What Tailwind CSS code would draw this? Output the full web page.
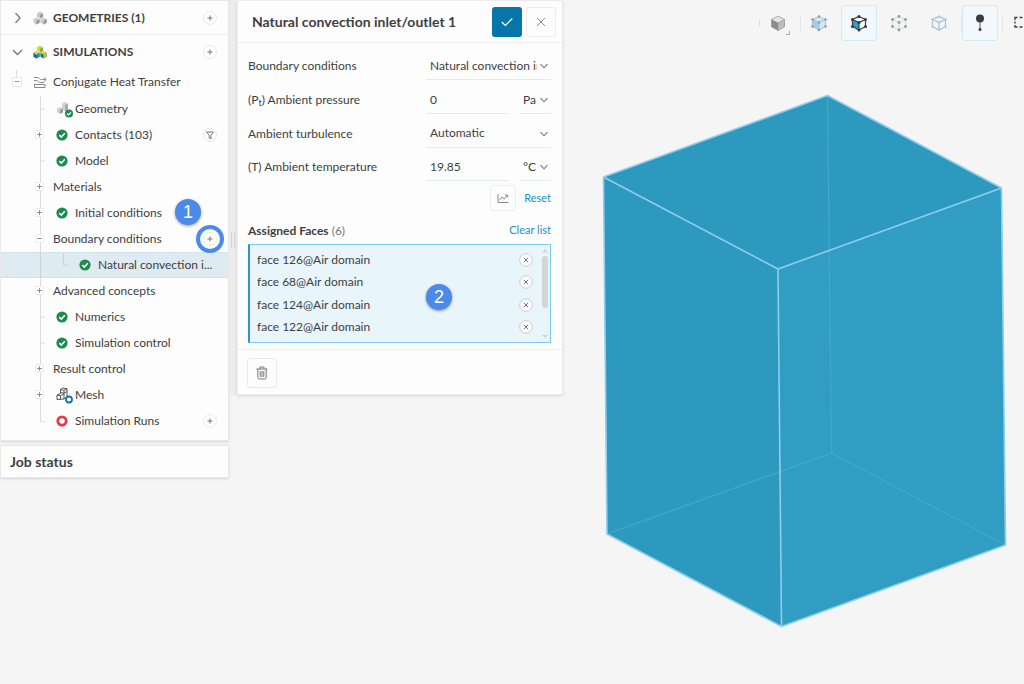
<!DOCTYPE html>
<html lang="en">
<head>
<meta charset="utf-8">
<meta name="viewport" content="width=device-width, initial-scale=1">
<title>Simulation setup</title>
<script src="https://cdn.jsdelivr.net/npm/@tailwindcss/browser@4"></script>
</head>
<body class="bg-[#f5f5f5] font-['Lato',sans-serif] text-[12px] text-[#404040]">

<!-- Shared icons -->
<svg class="hidden" aria-hidden="true">
  <symbol id="plus" viewBox="0 0 14 14"><circle cx="7" cy="7" r="6.4" fill="#fff" stroke="#e6e9ec"/><path d="M4.4 7h5.2M7 4.4v5.2" stroke="#777" fill="none"/></symbol>
  <symbol id="ok" viewBox="0 0 12 12"><circle cx="6" cy="6" r="5.6" fill="#1d8a4e"/><path d="M3.3 6.1l2 1.9 3.5-3.7" fill="none" stroke="#fff" stroke-width="1.6"/></symbol>
  <symbol id="chev" viewBox="0 0 10 10"><path d="M1.5 3.2L5 6.8l3.5-3.6" fill="none" stroke="#777" stroke-width="1.1"/></symbol>
  <symbol id="line-mid" viewBox="0 0 24 26"><path d="M12.5 0v26M12.5 13H17" fill="none" stroke="#dcdcdc"/></symbol>
  <symbol id="line-plus" viewBox="0 0 24 26"><path d="M12.5 0v26" stroke="#dcdcdc"/><path d="M7.500 8.500h8v8h-8z" fill="#fff" stroke="#ececec"/><path d="M9.200 12.500h4.600M11.500 10.200v4.600" stroke="#888" fill="none"/></symbol>
  <symbol id="line-minus" viewBox="0 0 24 26"><path d="M12.500 0v26" stroke="#dcdcdc"/><path d="M7.500 8.500h8v8h-8z" fill="#fff" stroke="#ececec"/><path d="M9.200 12.500h4.600" stroke="#888" fill="none"/></symbol>
  <symbol id="remove" viewBox="0 0 14 14"><circle cx="7" cy="7" r="6.300" fill="#fdfdfd" stroke="#ccc"/><path d="M4.800 4.800l4.400 4.400M9.200 4.800l-4.400 4.400" stroke="#777" fill="none"/></symbol>
  <symbol id="cubes" viewBox="0 0 14 14">
    <path d="M4 2.200L7 .5l3 1.700v3.600L7 7.500 4 5.800z" fill="#c9c9c9"/><path d="M7 4v3.500l3-1.700V2.200z" fill="#999"/>
    <path d="M.3 8L3.400 6.400 6.600 8v3.800L3.400 13.500.3 11.800z" fill="#cfcfcf"/><path d="M3.400 9.800v3.700l3.200-1.700V8z" fill="#999"/>
    <path d="M7.400 8l3.200-1.600L13.700 8v3.800l-3.100 1.700-3.200-1.700z" fill="#cfcfcf"/><path d="M10.600 9.800v3.700l3.100-1.700V8z" fill="#999"/>
  </symbol>
</svg>

<div class="flex min-h-screen items-start overflow-hidden">

  <!-- Project tree -->
  <aside class="w-[229px] shrink-0">
    <nav aria-label="Project" class="border border-[#e8e8e8] bg-[#fdfdfd] pb-[6px] shadow-sm">
      <div class="flex h-[34px] items-center border-b border-[#ececec] pr-[11px] pl-3">
        <button aria-label="Expand geometries" class="mr-[10px] h-[10px] w-[10px]"><svg class="h-full w-full" viewBox="0 0 10 10"><path d="M2.500 0l4.500 5-4.500 5" fill="none" stroke="#777" stroke-width="1.300"/></svg></button>
        <svg class="mr-[6px] h-[14px] w-[14px]"><use href="#cubes"/></svg>
        <h2 class="flex-1 font-bold">GEOMETRIES (1)</h2>
        <button aria-label="Add geometry" class="h-[14px] w-[14px]"><svg class="h-full w-full"><use href="#plus"/></svg></button>
      </div>
      <div class="flex h-[33px] items-center pr-[11px] pl-3">
        <button aria-label="Collapse simulations" class="mr-[10px] h-[10px] w-[10px]"><svg class="h-full w-full" viewBox="0 0 10 10"><path d="M0 3l4.500 4.500L9 3" fill="none" stroke="#777" stroke-width="1.300"/></svg></button>
        <svg class="mr-[6px] h-[14px] w-[14px]" viewBox="0 0 14 14">
          <path d="M4 2.200L7 .5l3 1.700v3.600L7 7.500 4 5.800z" fill="#d6d82c"/><path d="M7 4v3.500l3-1.700V2.200z" fill="#8fa839"/>
          <path d="M.3 8L3.400 6.400 6.600 8v3.800L3.400 13.500.3 11.800z" fill="#0b72ae"/><path d="M.3 8l3.100-1.600L6.600 8 3.400 9.800z" fill="#d6d82c"/><path d="M4.500 9.500v3.400l2.100-1.100V8z" fill="#4a93a0"/>
          <path d="M7.400 8l3.200-1.600L13.700 8v3.800l-3.100 1.700-3.200-1.700z" fill="#0b72ae"/><path d="M7.400 8l3.200-1.600L13.700 8l-3.100 1.800z" fill="#d6d82c"/><path d="M10.600 9.800v3.700l3.100-1.700V8z" fill="#c2c632"/>
        </svg>
        <h2 class="flex-1 font-bold">SIMULATIONS</h2>
        <button aria-label="Add simulation" class="h-[14px] w-[14px]"><svg class="h-full w-full"><use href="#plus"/></svg></button>
      </div>
      <div class="flex h-7 items-center">
        <button aria-label="Collapse Conjugate Heat Transfer" class="ml-[3px] h-[26px] w-6"><svg class="h-full w-full" viewBox="0 0 24 26"><path d="M12.500 1v8" stroke="#dcdcdc"/><path d="M8.500 8.500h9v9h-9z" fill="#fff" stroke="#e6e6e6"/><path d="M10.500 12.500h5" stroke="#999"/></svg></button>
        <svg class="mr-[6px] ml-[5px] h-[14px] w-[14px]" viewBox="0 0 14 14" fill="none" stroke="#888"><path d="M1 2.500h3.500c2 0 2 2 4 2H13M11 2.500l2.200 2L11 6.500M1 5.500h2.500c2 0 2 2 4 2H11M1.500 9.500H12v3H1.500z"/></svg>
        <span>Conjugate Heat Transfer</span>
      </div>
      <ul>
        <li class="flex h-[26px] items-center"><svg class="ml-[27px] h-[26px] w-6"><use href="#line-mid"/></svg>
          <svg class="mr-[2px] ml-[4px] h-[18px] w-[17px]" viewBox="0 0 17 18"><path d="M6 3.500L9 2l3 1.500v6l-3 1.800L6 9.500z" fill="#d2d2d2"/><path d="M9 5v6.300l3-1.800v-6z" fill="#aaa"/><path d="M1 8.500L4 7l3 1.500v3.800L4 14l-3-1.700z" fill="#cfcfcf"/><path d="M4 10v4l3-1.700V8.500z" fill="#9a9a9a"/><circle cx="13" cy="13.500" r="4" fill="#1d8a4e"/><path d="M11 13.500l1.500 1.400 2.500-2.600" fill="none" stroke="#fff" stroke-width="1.200"/></svg>
          <span>Geometry</span></li>
        <li class="flex h-[26px] items-center pr-[11px]"><button aria-label="Expand contacts" class="ml-[27px] h-[26px] w-6"><svg class="h-full w-full"><use href="#line-plus"/></svg></button>
          <svg class="mr-[7px] ml-1 h-3 w-3"><use href="#ok"/></svg><span class="flex-1">Contacts (103)</span>
          <button aria-label="Filter contacts" class="h-[14px] w-[14px]"><svg class="h-full w-full" viewBox="0 0 14 14"><circle cx="7" cy="7" r="6.400" fill="#fff" stroke="#dde3e7"/><path d="M3.500 4h7L8 7.200V10.800L6.200 10V7.200z" fill="none" stroke="#777"/></svg></button></li>
        <li class="flex h-[26px] items-center"><svg class="ml-[27px] h-[26px] w-6"><use href="#line-mid"/></svg>
          <svg class="mr-[7px] ml-1 h-3 w-3"><use href="#ok"/></svg><span>Model</span></li>
        <li class="flex h-[26px] items-center"><button aria-label="Expand materials" class="ml-[27px] h-[26px] w-6"><svg class="h-full w-full"><use href="#line-plus"/></svg></button><span class="pl-px">Materials</span></li>
        <li class="relative flex h-[26px] items-center"><button aria-label="Expand initial conditions" class="ml-[27px] h-[26px] w-6"><svg class="h-full w-full"><use href="#line-plus"/></svg></button>
          <svg class="mr-[7px] ml-1 h-3 w-3"><use href="#ok"/></svg><span>Initial conditions</span>
          <span class="absolute top-[-1px] right-[27px] flex h-[26px] w-[26px] items-center justify-center rounded-full bg-[#4b8ae8] font-['Liberation_Sans',sans-serif] text-[18px] text-white shadow-[0_1px_3px_#00000066]">1</span></li>
        <li class="relative flex h-[26px] items-center pr-[11px]"><button aria-label="Collapse boundary conditions" class="ml-[27px] h-[26px] w-6"><svg class="h-full w-full"><use href="#line-minus"/></svg></button><span class="flex-1 pl-px">Boundary conditions</span>
          <button aria-label="Add boundary condition" class="h-[14px] w-[14px]"><svg class="h-full w-full"><use href="#plus"/></svg></button>
          <span class="pointer-events-none absolute top-[-1px] right-1 z-10 h-7 w-7 rounded-full border-4 border-[#4b8ae8]"></span></li>
        <li class="flex h-[26px] items-center border-y border-[#d0e4ee] bg-[#dfebf2]"><svg class="ml-[27px] h-[26px] w-12" viewBox="0 0 48 26"><path d="M12.500 0v26M35.500 1v12H40" fill="none" stroke="#ccd3d8"/></svg>
          <svg class="mr-[7px] ml-[3px] h-3 w-3"><use href="#ok"/></svg><span>Natural convection i...</span></li>
        <li class="flex h-[26px] items-center"><button aria-label="Expand advanced concepts" class="ml-[27px] h-[26px] w-6"><svg class="h-full w-full"><use href="#line-plus"/></svg></button><span class="pl-px">Advanced concepts</span></li>
        <li class="flex h-[26px] items-center"><svg class="ml-[27px] h-[26px] w-6"><use href="#line-mid"/></svg>
          <svg class="mr-[7px] ml-1 h-3 w-3"><use href="#ok"/></svg><span>Numerics</span></li>
        <li class="flex h-[26px] items-center"><svg class="ml-[27px] h-[26px] w-6"><use href="#line-mid"/></svg>
          <svg class="mr-[7px] ml-1 h-3 w-3"><use href="#ok"/></svg><span>Simulation control</span></li>
        <li class="flex h-[26px] items-center"><button aria-label="Expand result control" class="ml-[27px] h-[26px] w-6"><svg class="h-full w-full"><use href="#line-plus"/></svg></button><span class="pl-px">Result control</span></li>
        <li class="flex h-[26px] items-center"><button aria-label="Expand mesh" class="ml-[27px] h-[26px] w-6"><svg class="h-full w-full"><use href="#line-plus"/></svg></button>
          <svg class="mr-[2px] ml-[4px] h-[18px] w-[17px]" viewBox="0 0 17 18" fill="none"><path d="M4.500 3.500L7 2l4 .8v8.400L8 13l-7 .5V9l3.500-1.500zM4.500 3.500L8 4.500l3-1.700M8 4.500V13M1 9l3.500.7L8 8M4.500 9.700v3.500M4.500 6.500l3.500.7 3-1.700M4.500 3.500v4" stroke="#555"/><circle cx="13" cy="13.500" r="3" fill="#fff" stroke="#0f76ac" stroke-width="1.800"/></svg>
          <span>Mesh</span></li>
        <li class="flex h-[26px] items-center pr-[11px]"><svg class="ml-[27px] h-[26px] w-6" viewBox="0 0 24 26"><path d="M12.500 0v13.500H17" fill="none" stroke="#dcdcdc"/></svg>
          <svg class="mr-[7px] ml-1 h-3 w-3" viewBox="0 0 12 12"><circle cx="6" cy="6" r="4.200" fill="#fff" stroke="#e23b48" stroke-width="2.800"/></svg><span class="flex-1">Simulation Runs</span>
          <button aria-label="Add run" class="h-[14px] w-[14px]"><svg class="h-full w-full"><use href="#plus"/></svg></button></li>
      </ul>
    </nav>
    <section class="mt-1 flex h-[33px] items-center border border-[#e8e8e8] bg-[#fdfdfd] pl-[9px] shadow-sm">
      <h2 class="text-[14px] font-bold">Job status</h2>
    </section>
  </aside>

  <!-- Boundary condition settings -->
  <div class="flex w-[334px] shrink-0 items-stretch">
    <div class="flex w-2 shrink-0 justify-center gap-[2px] bg-[#ececec] pt-[232px]">
      <span class="h-4 w-px bg-[#d4d4d4]"></span><span class="h-4 w-px bg-[#d4d4d4]"></span>
    </div>
    <form class="min-w-0 flex-1 border border-[#ececec] bg-[#fdfdfd] shadow-sm">
      <div class="flex h-[42px] items-center gap-1 border-b border-[#ececec] pr-[6px] pl-[14px]">
        <h1 class="flex-1 text-[14px] font-bold">Natural convection inlet/outlet 1</h1>
        <button type="button" aria-label="Apply" class="flex h-[30px] w-[30px] items-center justify-center rounded-[3px] bg-[#0675aa]"><svg class="h-3 w-3" viewBox="0 0 12 12"><path d="M.8 6l3.500 3.500 7-7" fill="none" stroke="#fff" stroke-width="1.200"/></svg></button>
        <button type="button" aria-label="Close" class="flex h-[30px] w-[30px] items-center justify-center rounded-[3px] border border-[#ececec]"><svg class="h-[10px] w-[10px]" viewBox="0 0 10 10"><path d="M1 1l8 8M9 1L1 9" stroke="#888"/></svg></button>
      </div>
      <div class="pt-[6px] pr-[11px] pl-[10px]">
        <div class="flex h-[34px] items-center">
          <label for="bc" class="flex-1">Boundary conditions</label>
          <div class="relative w-[125px]">
            <select id="bc" class="h-[28px] w-full appearance-none border-b border-[#e4e9ec] pr-[14px] pl-1"><option>Natural convection inlet/outlet</option></select>
            <svg class="pointer-events-none absolute top-[9px] right-[2px] h-[10px] w-[10px]"><use href="#chev"/></svg>
          </div>
        </div>
        <div class="flex h-[34px] items-center">
          <label for="pt" class="flex-1">(P<sub class="text-[9px]">t</sub>) Ambient pressure</label>
          <div class="flex w-[125px] justify-between">
            <input id="pt" value="0" class="h-[28px] w-[82px] border-b border-[#e4e9ec] pl-1">
            <div class="relative w-8">
              <select aria-label="Pressure unit" class="h-[28px] w-full appearance-none border-b border-[#e4e9ec] pl-1"><option>Pa</option></select>
              <svg class="pointer-events-none absolute top-[9px] right-[2px] h-[10px] w-[10px]"><use href="#chev"/></svg>
            </div>
          </div>
        </div>
        <div class="flex h-[33px] items-center">
          <label for="turb" class="flex-1">Ambient turbulence</label>
          <div class="relative w-[125px]">
            <select id="turb" class="h-[28px] w-full appearance-none border-b border-[#e4e9ec] pr-[14px] pl-1"><option>Automatic</option></select>
            <svg class="pointer-events-none absolute top-[9px] right-[2px] h-[10px] w-[10px]"><use href="#chev"/></svg>
          </div>
        </div>
        <div class="flex h-[34px] items-center">
          <label for="temp" class="flex-1">(T) Ambient temperature</label>
          <div class="flex w-[125px] justify-between">
            <input id="temp" value="19.85" class="h-[28px] w-[82px] border-b border-[#e4e9ec] pl-1">
            <div class="relative w-8">
              <select aria-label="Temperature unit" class="h-[28px] w-full appearance-none border-b border-[#e4e9ec] pl-1"><option>°C</option></select>
              <svg class="pointer-events-none absolute top-[9px] right-[2px] h-[10px] w-[10px]"><use href="#chev"/></svg>
            </div>
          </div>
        </div>
        <div class="mt-px flex h-[26px] items-center justify-end gap-2">
          <button type="button" aria-label="Plot" class="flex h-[26px] w-[26px] items-center justify-center rounded-[3px] border border-[#ececec]"><svg class="h-3 w-3" viewBox="0 0 12 12"><path d="M1 2v8.500h10.500M2.500 8l2.500-3 2.200 2 3-3.500M8 3h2.700v2.500" fill="none" stroke="#888"/></svg></button>
          <button type="button" class="text-[11px] text-[#2590c4]">Reset</button>
        </div>
        <div class="mt-1 flex h-[27px] items-center pt-1">
          <h2 id="faces" class="flex-1"><span class="font-bold">Assigned Faces</span> <span class="text-[#777]">(6)</span></h2>
          <button type="button" class="text-[11px] text-[#2590c4]">Clear list</button>
        </div>
        <div class="mt-[2px] flex h-[99px] border border-l-2 border-[#7ccbe9] border-l-[#2e96c2] bg-[#e8f5fb] py-1">
          <ul aria-labelledby="faces" class="relative flex flex-1 flex-col justify-between pr-[9px] pl-[7px]">
            <li class="flex h-[22px] items-center justify-between">face 126@Air domain<button type="button" aria-label="Remove face 126" class="h-[14px] w-[14px]"><svg class="h-full w-full"><use href="#remove"/></svg></button></li>
            <li class="flex h-[22px] items-center justify-between">face 68@Air domain<button type="button" aria-label="Remove face 68" class="h-[14px] w-[14px]"><svg class="h-full w-full"><use href="#remove"/></svg></button></li>
            <li class="flex h-[22px] items-center justify-between">face 124@Air domain<button type="button" aria-label="Remove face 124" class="h-[14px] w-[14px]"><svg class="h-full w-full"><use href="#remove"/></svg></button></li>
            <li class="flex h-[22px] items-center justify-between">face 122@Air domain<button type="button" aria-label="Remove face 122" class="h-[14px] w-[14px]"><svg class="h-full w-full"><use href="#remove"/></svg></button></li>
            <li aria-hidden="true" class="absolute top-[35px] right-[90px] flex h-[26px] w-[26px] items-center justify-center rounded-full bg-[#4b8ae8] font-['Liberation_Sans',sans-serif] text-[18px] text-white shadow-[0_1px_3px_#00000066]">2</li>
          </ul>
          <svg class="mr-[2px] h-full w-[6px]" viewBox="0 0 6 89" fill="#d2d6d9"><path d="M0 3.500L3 0l3 3.500zM0 86l3 3.500L6 86z"/><rect y="7" width="6" height="52" rx="3"/></svg>
        </div>
      </div>
      <div class="mt-[6px] border-t border-[#ececec] px-[9px] pt-2 pb-[6px]">
        <button type="button" aria-label="Delete" class="flex h-[30px] w-[30px] items-center justify-center rounded-[3px] border border-[#e8e8e8]"><svg class="h-[14px] w-3" viewBox="0 0 12 14" fill="none" stroke="#777"><path d="M.5 3h11M4 3V1h4v2M1.800 3v8.500q0 1.500 1.500 1.500h5.400q1.500 0 1.500-1.500V3M4.200 5v6M6 5v6M7.800 5v6"/></svg></button>
      </div>
    </form>
  </div>

  <!-- 3D viewer -->
  <main class="flex h-screen min-w-0 flex-1 flex-col">
    <div role="toolbar" aria-label="View" class="-mr-[15px] flex h-[45px] items-center justify-end gap-1">
      <div class="flex items-center">
        <span class="h-[6px] w-px bg-[#ddd]"></span>
        <button aria-label="Solid view" class="flex h-9 w-9 items-center justify-center"><svg class="h-6 w-6" viewBox="0 0 24 24"><path d="M12 5l6.500 3.500L12 12 5.500 8.500z" fill="#e4e4e4"/><path d="M5.500 8.500L12 12v7.500l-6.500-3.700z" fill="#8b8b8b"/><path d="M18.500 8.500L12 12v7.500l6.500-3.700z" fill="#bdbdbd"/><path d="M12 5l6.500 3.500v7.300L12 19.500l-6.500-3.700V8.500zM5.500 8.500L12 12l6.500-3.500M12 12v7.500" fill="none" stroke="#999" stroke-width=".8"/><path d="M20 23.500h3.500V20" fill="none" stroke="#aaa"/></svg></button>
      </div>
      <div class="flex items-center">
        <span class="h-[16px] w-px bg-[#e6e6e6]"></span>
        <button aria-label="Select volumes" class="flex h-9 w-9 items-center justify-center"><svg class="h-6 w-6" viewBox="0 0 24 24"><path d="M12 5.500l6.500 3v7L12 19l-6.500-3.500v-7z" fill="#cfe9f6"/><path d="M5.500 8.500l6.500 3V19l-6.500-3.500z" fill="#9dd3f0"/><path d="M12 5.500l6.500 3v7L12 19l-6.500-3.500v-7zM5.500 8.500l6.500 3 6.500-3M12 11.500V19" fill="none" stroke="#a5c4d0"/><g fill="#999"><circle cx="12" cy="5.500" r="1.300"/><circle cx="18.500" cy="8.500" r="1.300"/><circle cx="5.500" cy="8.500" r="1.300"/><circle cx="12" cy="11.500" r="1.300"/><circle cx="18.500" cy="15.500" r="1.300"/><circle cx="5.500" cy="15.500" r="1.300"/><circle cx="12" cy="19" r="1.300"/></g></svg></button>
      </div>
      <button aria-label="Select faces" aria-pressed="true" class="flex h-9 w-9 items-center justify-center rounded-[3px] border border-[#d3eaf4] bg-[#f3f8fc]"><svg class="h-6 w-6" viewBox="0 0 24 24"><path d="M5.500 8.500l6.500 3V19l-6.500-3.500z" fill="#2f9fd0"/><path d="M12 5.500l6.500 3v7L12 19l-6.500-3.500v-7zM5.500 8.500l6.500 3 6.500-3M12 11.500V19" fill="none" stroke="#444" stroke-width="1.200"/><g fill="#383838"><circle cx="12" cy="5.500" r="1.500"/><circle cx="18.500" cy="8.500" r="1.500"/><circle cx="5.500" cy="8.500" r="1.500"/><circle cx="12" cy="11.500" r="1.500"/><circle cx="18.500" cy="15.500" r="1.500"/><circle cx="5.500" cy="15.500" r="1.500"/><circle cx="12" cy="19" r="1.500"/></g></svg></button>
      <button aria-label="Select nodes" class="flex h-9 w-9 items-center justify-center"><svg class="h-6 w-6" viewBox="0 0 24 24"><path d="M12 5.500l6.500 3v7L12 19l-6.500-3.500v-7zM5.500 8.500l6.500 3 6.500-3M12 11.500V19" fill="none" stroke="#c4dfea"/><g fill="#999"><circle cx="12" cy="5.500" r="1.400"/><circle cx="18.500" cy="8.500" r="1.400"/><circle cx="5.500" cy="8.500" r="1.400"/><circle cx="12" cy="11.500" r="1.400"/><circle cx="18.500" cy="15.500" r="1.400"/><circle cx="5.500" cy="15.500" r="1.400"/><circle cx="12" cy="19" r="1.400"/></g></svg></button>
      <button aria-label="Select edges" class="flex h-9 w-9 items-center justify-center"><svg class="h-6 w-6" viewBox="0 0 24 24"><path d="M12 5.500l6.500 3v7L12 19l-6.500-3.500v-7zM5.500 8.500l6.500 3 6.500-3M12 11.500V19" fill="none" stroke="#b3bcc1" stroke-width="1.200"/><g fill="#9fd2ee"><circle cx="12" cy="5.500" r="1.300"/><circle cx="18.500" cy="8.500" r="1.300"/><circle cx="5.500" cy="8.500" r="1.300"/><circle cx="12" cy="11.500" r="1.300"/><circle cx="18.500" cy="15.500" r="1.300"/><circle cx="5.500" cy="15.500" r="1.300"/><circle cx="12" cy="19" r="1.300"/></g></svg></button>
      <div class="flex items-center">
        <span class="h-[16px] w-px bg-[#e6e6e6]"></span>
        <button aria-label="Probe point" aria-pressed="true" class="flex h-9 w-9 items-center justify-center rounded-[3px] border border-[#d3eaf4] bg-[#f3f8fc]"><svg class="h-6 w-6" viewBox="0 0 24 24"><path d="M12 8v11" stroke="#555"/><circle cx="12" cy="7.500" r="4" fill="#3c3c3c"/><circle cx="12" cy="18.500" r="1.500" fill="#3c3c3c"/></svg></button>
      </div>
      <div class="flex items-center">
        <span class="h-[16px] w-px bg-[#e6e6e6]"></span>
        <button aria-label="Box select" class="flex h-9 w-9 items-center justify-center"><svg class="h-6 w-6" viewBox="0 0 24 24"><path d="M6 9V6.500h2.500M10.500 6.500h3M15.500 6.500H18M6 10.500v2M6 14v2h2.500M10.500 16h3M15.500 16H18" fill="none" stroke="#444" stroke-width="1.400"/></svg></button>
      </div>
    </div>
    <svg class="min-h-0 w-full flex-1" viewBox="563 45 461 639" role="img" aria-label="Air domain box">
      <path d="M827.500 95.500L603.500 177l3.500 357 174.500 92.500L1005.500 545l-4-357z" fill="#319dc2"/>
      <path d="M827.500 95.500L1001.500 188 778 269l3.500 357.500L607 534l-3.500-357z" fill="#2d99be"/>
      <path d="M827.500 95.500l4 357.500L607 534M831.500 453l174 92" fill="none" stroke="#45a7ca" stroke-width="1.200"/>
      <path d="M827.500 95.500L603.500 177l3.500 357 174.500 92.500L1005.500 545l-4-357zM603.500 177L778 269l223.500-81M778 269l3.500 357" fill="none" stroke="#8fcdee" stroke-width="1.600" stroke-linejoin="round"/>
    </svg>
  </main>
</div>
</body>
</html>
